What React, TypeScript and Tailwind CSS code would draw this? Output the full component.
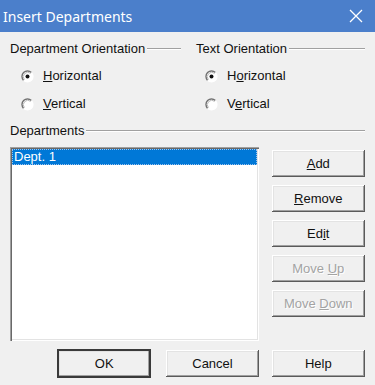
import React from "react"

const bevel =
    "shadow-[inset_-1px_-1px_#5a5a5a,inset_1px_1px_#ffffff,inset_-2px_-2px_#a0a0a0,inset_2px_2px_#e3e3e3]"

function Radio({ checked }: { checked?: boolean }) {
    return (
        <svg width="13" height="13" viewBox="0 0 13 13" className="shrink-0">
            <circle cx="6.5" cy="6.5" r="5.5" fill="#ffffff" />
            <path d="M2.6 10.4 A5.5 5.5 0 0 1 10.4 2.6" fill="none" stroke="#707070" strokeWidth="1.4" />
            <path d="M3.4 9.6 A4.4 4.4 0 0 1 9.6 3.4" fill="none" stroke="#b8b8b8" strokeWidth="1" />
            <path d="M10.4 2.6 A5.5 5.5 0 0 1 2.6 10.4" fill="none" stroke="#ffffff" strokeWidth="1.2" />
            {checked && <circle cx="6.5" cy="6.5" r="2" fill="#111111" />}
        </svg>
    )
}

function GroupLabel({ text }: { text: string }) {
    return (
        <div className="flex items-center gap-[2px] h-[16px]">
            <span className="whitespace-nowrap">{text}</span>
            <div className="flex-1 h-[2px] border-t border-[#a0a0a0] border-b border-b-white" />
        </div>
    )
}

function RadioRow({ checked, children, indent }: { checked?: boolean; children: React.ReactNode; indent: string }) {
    return (
        <div className={`flex items-center h-[20px] ${indent}`}>
            <Radio checked={checked} />
            <span className="ml-[9px]">{children}</span>
        </div>
    )
}

function Btn({ children, disabled, isDefault, className = "" }: { children: React.ReactNode; disabled?: boolean; isDefault?: boolean; className?: string }) {
    return (
        <div
            className={`h-[27px] flex items-center justify-center bg-[#f0f0f0] ${bevel} ${
                isDefault ? "outline outline-2 -outline-offset-1 outline-[#3a3a3a]" : ""
            } ${disabled ? "text-[#a3a3a3] [text-shadow:1px_1px_0_#ffffff]" : "text-[#111]"} ${className}`}
        >
            {children}
        </div>
    )
}

export default function App() {
    return (
        <div
            className="w-[375px] h-[385px] bg-[#f0f0f0] flex flex-col text-[13px] text-[#111] overflow-hidden"
            style={{ fontFamily: '"Liberation Sans", Arial, sans-serif' }}
        >
            <div className="h-[32px] bg-[#4b7fcb] flex items-center justify-between pl-[3px] pr-[12px] shrink-0">
                <span className="text-white text-[14px]" style={{ fontFamily: '"Noto Sans", sans-serif' }}>
                    Insert Departments
                </span>
                <svg width="14" height="14" viewBox="0 0 14 14">
                    <path d="M1 1 L13 13 M13 1 L1 13" stroke="#ffffff" strokeWidth="1.3" />
                </svg>
            </div>

            <div className="flex flex-col px-[10px] pt-[9px]">
                <div className="flex">
                    <div className="w-[171px] flex flex-col">
                        <GroupLabel text="Department Orientation" />
                        <div className="flex flex-col gap-[8px] mt-[9px]">
                            <RadioRow checked indent="pl-[11px]">
                                <u>H</u>orizontal
                            </RadioRow>
                            <RadioRow indent="pl-[11px]">
                                <u>V</u>ertical
                            </RadioRow>
                        </div>
                    </div>
                    <div className="flex-1 flex flex-col ml-[15px]">
                        <GroupLabel text="Text Orientation" />
                        <div className="flex flex-col gap-[8px] mt-[9px]">
                            <RadioRow checked indent="pl-[9px]">
                                H<u>o</u>rizontal
                            </RadioRow>
                            <RadioRow indent="pl-[9px]">
                                V<u>e</u>rtical
                            </RadioRow>
                        </div>
                    </div>
                </div>

                <div className="mt-[9px]">
                    <GroupLabel text="Departments" />
                </div>

                <div className="flex mt-[8px]">
                    <div className="w-[250px] h-[194px] bg-white shadow-[inset_1px_1px_#a0a0a0,inset_2px_2px_#696969,inset_-1px_-1px_#ffffff,inset_-2px_-2px_#e3e3e3] p-[2px]">
                        <div className="h-[16px] bg-[#0078d7] text-white flex items-center pl-[2px] outline outline-1 outline-dotted outline-[#9cc3ee] -outline-offset-1">
                            Dept. 1
                        </div>
                    </div>
                    <div className="flex flex-col gap-[8px] ml-[13px] mt-[3px] w-[94px]">
                        <Btn>
                            <u>A</u>dd
                        </Btn>
                        <Btn>
                            <u>R</u>emove
                        </Btn>
                        <Btn>
                            Ed<u>i</u>t
                        </Btn>
                        <Btn disabled>
                            Move&nbsp;<u>U</u>p
                        </Btn>
                        <Btn disabled>
                            Move&nbsp;<u>D</u>own
                        </Btn>
                    </div>
                </div>

                <div className="flex mt-[9px] pl-[48px]">
                    <Btn isDefault className="w-[93px]">
                        OK
                    </Btn>
                    <Btn className="w-[93px] ml-[16px]">Cancel</Btn>
                    <Btn className="w-[94px] ml-[13px]">Help</Btn>
                </div>
            </div>
        </div>
    )
}
